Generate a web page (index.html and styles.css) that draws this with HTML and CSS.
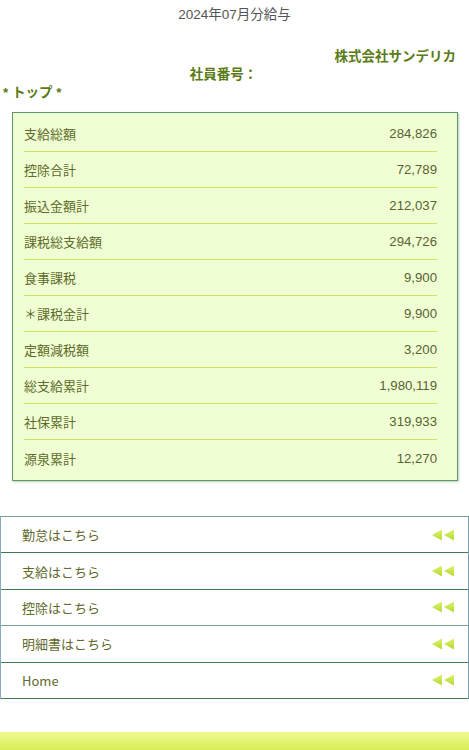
FILE: index.html
```html
<!DOCTYPE html>
<html lang="ja">
<head>
<meta charset="utf-8">
<title>2024年07月分給与</title>
<link rel="stylesheet" href="styles.css">
</head>
<body>
<header class="page-head">
  <h1 class="title">2024年07月分給与</h1>
  <div class="company">株式会社サンデリカ</div>
  <div class="empno">社員番号：</div>
  <div class="section">* トップ *</div>
</header>

<section class="summary">
  <div class="row"><span class="label">支給総額</span><span class="value">284,826</span></div>
  <div class="row"><span class="label">控除合計</span><span class="value">72,789</span></div>
  <div class="row"><span class="label">振込金額計</span><span class="value">212,037</span></div>
  <div class="row"><span class="label">課税総支給額</span><span class="value">294,726</span></div>
  <div class="row"><span class="label">食事課税</span><span class="value">9,900</span></div>
  <div class="row"><span class="label">＊課税金計</span><span class="value">9,900</span></div>
  <div class="row"><span class="label">定額減税額</span><span class="value">3,200</span></div>
  <div class="row"><span class="label">総支給累計</span><span class="value">1,980,119</span></div>
  <div class="row"><span class="label">社保累計</span><span class="value">319,933</span></div>
  <div class="row"><span class="label">源泉累計</span><span class="value">12,270</span></div>
</section>

<nav class="menu">
  <a class="item" href="#"><span>勤怠はこちら</span><svg class="arrow" viewBox="0 0 23 12" width="23" height="12"><defs><linearGradient id="g1" x1="0" y1="0" x2="0" y2="1"><stop offset="0" stop-color="#dcf270"/><stop offset="1" stop-color="#b2d830"/></linearGradient></defs><polygon points="0,6 10,0.5 10,11.5" fill="url(#g1)"/><polygon points="12,6 22,0.5 22,11.5" fill="url(#g1)"/></svg></a>
  <a class="item" href="#"><span>支給はこちら</span><svg class="arrow" viewBox="0 0 23 12" width="23" height="12"><polygon points="0,6 10,0.5 10,11.5" fill="url(#g1)"/><polygon points="12,6 22,0.5 22,11.5" fill="url(#g1)"/></svg></a>
  <a class="item" href="#"><span>控除はこちら</span><svg class="arrow" viewBox="0 0 23 12" width="23" height="12"><polygon points="0,6 10,0.5 10,11.5" fill="url(#g1)"/><polygon points="12,6 22,0.5 22,11.5" fill="url(#g1)"/></svg></a>
  <a class="item" href="#"><span>明細書はこちら</span><svg class="arrow" viewBox="0 0 23 12" width="23" height="12"><polygon points="0,6 10,0.5 10,11.5" fill="url(#g1)"/><polygon points="12,6 22,0.5 22,11.5" fill="url(#g1)"/></svg></a>
  <a class="item" href="#"><span>Home</span><svg class="arrow" viewBox="0 0 23 12" width="23" height="12"><polygon points="0,6 10,0.5 10,11.5" fill="url(#g1)"/><polygon points="12,6 22,0.5 22,11.5" fill="url(#g1)"/></svg></a>
</nav>

<footer class="footer-bar"></footer>
</body>
</html>
```

FILE: styles.css
```css
html, body {
  margin: 0;
  padding: 0;
  background: #ffffff;
}
body {
  font-family: "Liberation Sans", "Noto Sans CJK JP", sans-serif;
  color: #5c6530;
  width: 469px;
  overflow-x: hidden;
}
.page-head {
  display: flex;
  flex-direction: column;
}
.title {
  margin: 0;
  padding-top: 6px;
  height: 21px;
  font-size: 13.5px;
  font-weight: normal;
  color: #555555;
  text-align: center;
  line-height: 18px;
}
.company {
  margin-top: 21px;
  font-size: 13.5px;
  font-weight: bold;
  color: #5b7b17;
  text-align: right;
  padding-right: 13px;
  line-height: 17px;
}
.empno {
  font-size: 13.5px;
  font-weight: bold;
  color: #5b7b17;
  text-align: center;
  padding-right: 22px;
  line-height: 17px;
  margin-top: 1px;
}
.section {
  font-size: 13.5px;
  font-weight: bold;
  color: #5b7b17;
  padding-left: 3px;
  line-height: 17px;
  margin-top: 1px;
}
.summary {
  margin: 11px 11px 0 12px;
  background: #efffd3;
  border: 1px solid #5f9a6a;
  box-shadow: 1px 1px 2px rgba(60, 110, 70, 0.35);
  padding: 3px 20px 4px 11px;
  display: flex;
  flex-direction: column;
}
.row {
  display: flex;
  justify-content: space-between;
  align-items: center;
  height: 35px;
  border-bottom: 1px solid #cfe25a;
  font-size: 13px;
}
.row:last-child {
  border-bottom: none;
  height: 36px;
}
.label {
  font-family: "Noto Sans CJK JP", sans-serif;
  color: #5f6a2c;
}
.value {
  font-family: "Liberation Sans", sans-serif;
  font-size: 13.2px;
  color: #5a6232;
}
.menu {
  margin-top: 35px;
  display: flex;
  flex-direction: column;
  border-top: 1px solid #7aa09a;
  border-left: 1px solid #8aaac4;
  border-right: 1px solid #7a9eaa;
}
.item {
  display: flex;
  align-items: center;
  justify-content: space-between;
  height: 35.4px;
  padding: 0 13px 0 21px;
  border-bottom: 1px solid #3f7a55;
  text-decoration: none;
  font-family: "Noto Sans CJK JP", "Liberation Sans", sans-serif;
  font-size: 13px;
  color: #5f6a2c;
}
.item:nth-child(3) {
  border-bottom-color: #7aa09a;
}
.arrow {
  display: block;
}
.footer-bar {
  margin-top: 33px;
  height: 30px;
  background: linear-gradient(#edfa90, #c9e630);
}
```
